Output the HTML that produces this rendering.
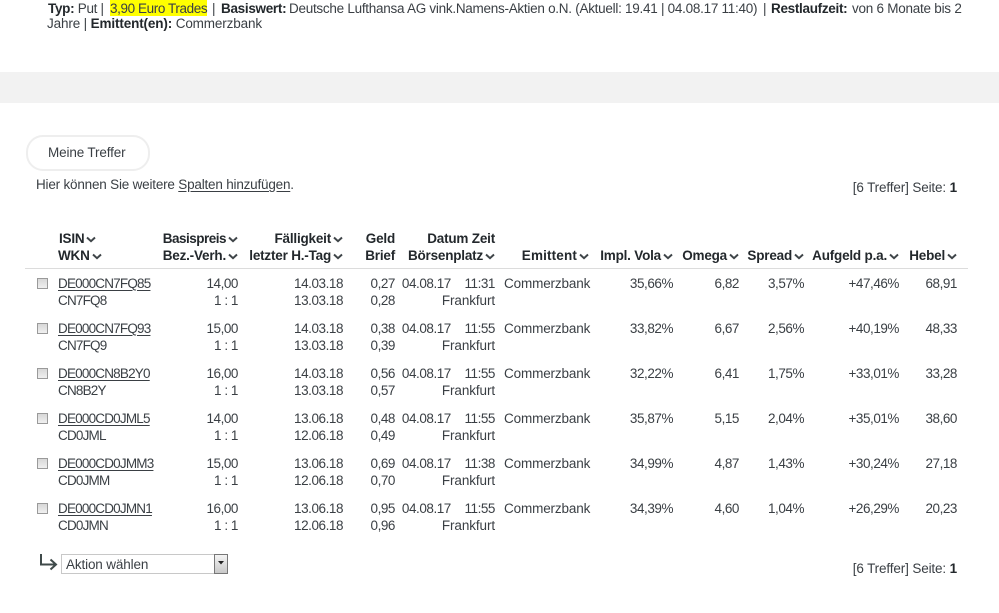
<!DOCTYPE html>
<html><head><meta charset="utf-8">
<style>
html,body{margin:0;padding:0;background:#fff}
body{width:999px;height:613px;position:relative;overflow:hidden;font-family:"Liberation Sans",sans-serif;font-size:13.5px;letter-spacing:-.14px;color:#3a3f44;line-height:17px}
.a{position:absolute;white-space:nowrap}
.r{text-align:right;letter-spacing:-.45px}
.r.f{letter-spacing:-.1px}
.r.d{word-spacing:3.5px}
.i{letter-spacing:-.8px}
.w{letter-spacing:-.8px}
.e{letter-spacing:-.14px}
.l{letter-spacing:-.3px}
b{color:#23282c;font-weight:700}
.h,.r.h{color:#23282c;font-weight:700;letter-spacing:-.2px}
u{text-underline-offset:2px}
.h svg{display:inline-block;margin-left:2px;vertical-align:0}
.cb{position:absolute;left:37px;width:9px;height:9px;border:1px solid #9a9a9a;background:linear-gradient(#d8d8d8,#f0f0f0)}
</style></head><body>
<div class="a l" style="left:48px;top:0"><b>Typ:</b> Put |</div>
<div class="a l" style="left:110px;top:0;width:97px;height:16px;background:#ffff00;letter-spacing:-.4px;line-height:17px">3,90 Euro Trades</div>
<div class="a l" style="left:212px;top:0">|</div>
<div class="a l" style="left:221px;top:0"><b>Basiswert:</b></div>
<div class="a l" style="left:289px;top:0;letter-spacing:-.27px">Deutsche Lufthansa AG vink.Namens-Aktien o.N. (Aktuell: 19.41 | 04.08.17 11:40)</div>
<div class="a l" style="left:763px;top:0">|</div>
<div class="a l" style="left:771px;top:0"><b>Restlaufzeit:</b></div>
<div class="a e" style="left:852px;top:0;letter-spacing:-.25px">von 6 Monate bis 2</div>
<div class="a e" style="left:47px;top:15px">Jahre | <b>Emittent(en):</b> Commerzbank</div>
<div class="a" style="left:0;top:72px;width:999px;height:31px;background:#f2f2f2"></div>
<div class="a" style="left:26px;top:135px;width:120px;height:32px;border:2px solid #eeeeee;border-radius:17px;background:#fff"></div>
<div class="a" style="left:48px;top:144px">Meine Treffer</div>
<div class="a" style="left:36px;top:176px;letter-spacing:-.2px">Hier können Sie weitere <u>Spalten hinzufügen</u>.</div>
<div class="a" style="right:42px;top:179px">[6 Treffer] Seite: <b>1</b></div>

<svg width="0" height="0" style="position:absolute"><defs><symbol id="c" viewBox="0 0 10 7"><path d="M1 1.5L5 5.2L9 1.5" fill="none" stroke="#3f4549" stroke-width="2"/></symbol></defs></svg>

<div class="a h" style="left:59px;top:230px">ISIN<svg width="10" height="7"><use href="#c"/></svg></div>
<div class="a h" style="left:58px;top:247px">WKN<svg width="10" height="7"><use href="#c"/></svg></div>
<div class="a h r" style="right:761px;top:230px;letter-spacing:-.5px">Basispreis<svg width="10" height="7"><use href="#c"/></svg></div>
<div class="a h r" style="right:761px;top:247px">Bez.-Verh.<svg width="10" height="7"><use href="#c"/></svg></div>
<div class="a h r" style="right:656px;top:230px">Fälligkeit<svg width="10" height="7"><use href="#c"/></svg></div>
<div class="a h r" style="right:656px;top:247px">letzter H.-Tag<svg width="10" height="7"><use href="#c"/></svg></div>
<div class="a h r" style="right:604px;top:230px">Geld</div>
<div class="a h r" style="right:604px;top:247px">Brief</div>
<div class="a h r" style="right:504px;top:230px">Datum Zeit</div>
<div class="a h r" style="right:504px;top:247px">Börsenplatz<svg width="10" height="7"><use href="#c"/></svg></div>
<div class="a h r" style="right:410px;top:247px;letter-spacing:.15px">Emittent<svg width="10" height="7"><use href="#c"/></svg></div>
<div class="a h r" style="right:326px;top:247px">Impl. Vola<svg width="10" height="7"><use href="#c"/></svg></div>
<div class="a h r" style="right:260px;top:247px">Omega<svg width="10" height="7"><use href="#c"/></svg></div>
<div class="a h r" style="right:195px;top:247px">Spread<svg width="10" height="7"><use href="#c"/></svg></div>
<div class="a h r" style="right:100px;top:247px">Aufgeld p.a.<svg width="10" height="7"><use href="#c"/></svg></div>
<div class="a h r" style="right:42px;top:247px">Hebel<svg width="10" height="7"><use href="#c"/></svg></div>
<div class="a" style="left:25px;top:268px;width:943px;height:1px;background:#dcdcdc"></div>

<!-- row 1 -->
<div class="cb" style="top:278px"></div>
<div class="a i" style="left:58px;top:275px"><u>DE000CN7FQ85</u></div><div class="a w" style="left:58px;top:292px">CN7FQ8</div>
<div class="a r" style="right:761px;top:275px">14,00</div><div class="a r" style="right:761px;top:292px">1 : 1</div>
<div class="a r" style="right:656px;top:275px">14.03.18</div><div class="a r" style="right:656px;top:292px">13.03.18</div>
<div class="a r" style="right:604px;top:275px">0,27</div><div class="a r" style="right:604px;top:292px">0,28</div>
<div class="a r d" style="right:504px;top:275px">04.08.17&nbsp; 11:31</div><div class="a r f" style="right:504px;top:292px">Frankfurt</div>
<div class="a" style="left:504px;top:275px">Commerzbank</div>
<div class="a r" style="right:326px;top:275px">35,66%</div><div class="a r" style="right:260px;top:275px">6,82</div><div class="a r" style="right:195px;top:275px">3,57%</div><div class="a r" style="right:100px;top:275px">+47,46%</div><div class="a r" style="right:42px;top:275px">68,91</div>

<!-- row 2 -->
<div class="cb" style="top:323px"></div>
<div class="a i" style="left:58px;top:320px"><u>DE000CN7FQ93</u></div><div class="a w" style="left:58px;top:337px">CN7FQ9</div>
<div class="a r" style="right:761px;top:320px">15,00</div><div class="a r" style="right:761px;top:337px">1 : 1</div>
<div class="a r" style="right:656px;top:320px">14.03.18</div><div class="a r" style="right:656px;top:337px">13.03.18</div>
<div class="a r" style="right:604px;top:320px">0,38</div><div class="a r" style="right:604px;top:337px">0,39</div>
<div class="a r d" style="right:504px;top:320px">04.08.17&nbsp; 11:55</div><div class="a r f" style="right:504px;top:337px">Frankfurt</div>
<div class="a" style="left:504px;top:320px">Commerzbank</div>
<div class="a r" style="right:326px;top:320px">33,82%</div><div class="a r" style="right:260px;top:320px">6,67</div><div class="a r" style="right:195px;top:320px">2,56%</div><div class="a r" style="right:100px;top:320px">+40,19%</div><div class="a r" style="right:42px;top:320px">48,33</div>

<!-- row 3 -->
<div class="cb" style="top:368px"></div>
<div class="a i" style="left:58px;top:365px"><u>DE000CN8B2Y0</u></div><div class="a w" style="left:58px;top:382px">CN8B2Y</div>
<div class="a r" style="right:761px;top:365px">16,00</div><div class="a r" style="right:761px;top:382px">1 : 1</div>
<div class="a r" style="right:656px;top:365px">14.03.18</div><div class="a r" style="right:656px;top:382px">13.03.18</div>
<div class="a r" style="right:604px;top:365px">0,56</div><div class="a r" style="right:604px;top:382px">0,57</div>
<div class="a r d" style="right:504px;top:365px">04.08.17&nbsp; 11:55</div><div class="a r f" style="right:504px;top:382px">Frankfurt</div>
<div class="a" style="left:504px;top:365px">Commerzbank</div>
<div class="a r" style="right:326px;top:365px">32,22%</div><div class="a r" style="right:260px;top:365px">6,41</div><div class="a r" style="right:195px;top:365px">1,75%</div><div class="a r" style="right:100px;top:365px">+33,01%</div><div class="a r" style="right:42px;top:365px">33,28</div>

<!-- row 4 -->
<div class="cb" style="top:413px"></div>
<div class="a i" style="left:58px;top:410px"><u>DE000CD0JML5</u></div><div class="a w" style="left:58px;top:427px">CD0JML</div>
<div class="a r" style="right:761px;top:410px">14,00</div><div class="a r" style="right:761px;top:427px">1 : 1</div>
<div class="a r" style="right:656px;top:410px">13.06.18</div><div class="a r" style="right:656px;top:427px">12.06.18</div>
<div class="a r" style="right:604px;top:410px">0,48</div><div class="a r" style="right:604px;top:427px">0,49</div>
<div class="a r d" style="right:504px;top:410px">04.08.17&nbsp; 11:55</div><div class="a r f" style="right:504px;top:427px">Frankfurt</div>
<div class="a" style="left:504px;top:410px">Commerzbank</div>
<div class="a r" style="right:326px;top:410px">35,87%</div><div class="a r" style="right:260px;top:410px">5,15</div><div class="a r" style="right:195px;top:410px">2,04%</div><div class="a r" style="right:100px;top:410px">+35,01%</div><div class="a r" style="right:42px;top:410px">38,60</div>

<!-- row 5 -->
<div class="cb" style="top:458px"></div>
<div class="a i" style="left:58px;top:455px"><u>DE000CD0JMM3</u></div><div class="a w" style="left:58px;top:472px">CD0JMM</div>
<div class="a r" style="right:761px;top:455px">15,00</div><div class="a r" style="right:761px;top:472px">1 : 1</div>
<div class="a r" style="right:656px;top:455px">13.06.18</div><div class="a r" style="right:656px;top:472px">12.06.18</div>
<div class="a r" style="right:604px;top:455px">0,69</div><div class="a r" style="right:604px;top:472px">0,70</div>
<div class="a r d" style="right:504px;top:455px">04.08.17&nbsp; 11:38</div><div class="a r f" style="right:504px;top:472px">Frankfurt</div>
<div class="a" style="left:504px;top:455px">Commerzbank</div>
<div class="a r" style="right:326px;top:455px">34,99%</div><div class="a r" style="right:260px;top:455px">4,87</div><div class="a r" style="right:195px;top:455px">1,43%</div><div class="a r" style="right:100px;top:455px">+30,24%</div><div class="a r" style="right:42px;top:455px">27,18</div>

<!-- row 6 -->
<div class="cb" style="top:503px"></div>
<div class="a i" style="left:58px;top:500px"><u>DE000CD0JMN1</u></div><div class="a w" style="left:58px;top:517px">CD0JMN</div>
<div class="a r" style="right:761px;top:500px">16,00</div><div class="a r" style="right:761px;top:517px">1 : 1</div>
<div class="a r" style="right:656px;top:500px">13.06.18</div><div class="a r" style="right:656px;top:517px">12.06.18</div>
<div class="a r" style="right:604px;top:500px">0,95</div><div class="a r" style="right:604px;top:517px">0,96</div>
<div class="a r d" style="right:504px;top:500px">04.08.17&nbsp; 11:55</div><div class="a r f" style="right:504px;top:517px">Frankfurt</div>
<div class="a" style="left:504px;top:500px">Commerzbank</div>
<div class="a r" style="right:326px;top:500px">34,39%</div><div class="a r" style="right:260px;top:500px">4,60</div><div class="a r" style="right:195px;top:500px">1,04%</div><div class="a r" style="right:100px;top:500px">+26,29%</div><div class="a r" style="right:42px;top:500px">20,23</div>

<svg class="a" style="left:39px;top:553px" width="20" height="18" viewBox="0 0 20 18"><path d="M2 1V11.5H16M11.5 6.5L17 11.5L11.5 16.5" fill="none" stroke="#3f4a4a" stroke-width="2"/></svg>
<div class="a" style="left:61px;top:554px;width:165px;height:18px;border:1px solid #c8c8c8;box-sizing:content-box;background:#fff"></div>
<div class="a" style="left:66px;top:556px">Aktion wählen</div>
<div class="a" style="left:214px;top:554px;width:12px;height:18px;border:1px solid #777;background:linear-gradient(#f4f4f4,#c8c8c8)"></div>
<svg class="a" style="left:218px;top:561px" width="6" height="4"><path d="M0 0H6L3 3.5Z" fill="#222"/></svg>
<div class="a" style="right:42px;top:560px">[6 Treffer] Seite: <b>1</b></div>
</body></html>
